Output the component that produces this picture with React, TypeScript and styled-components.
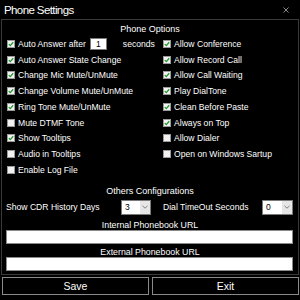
import styled, { createGlobalStyle } from "styled-components";

const GlobalStyle = createGlobalStyle`
  html, body {
    margin: 0;
    padding: 0;
    background: #000;
  }
  body {
    font-family: "Liberation Sans", Arial, sans-serif;
    color: #fff;
  }
`;

const Window = styled.div`
  width: 300px;
  height: 300px;
  background: #000;
  display: flex;
  flex-direction: column;
  overflow: hidden;
`;

const TitleBar = styled.div`
  height: 19px;
  display: flex;
  align-items: center;
  justify-content: space-between;
  padding: 0 11px 0 4px;
`;

const Title = styled.span`
  font-size: 11.5px;
  letter-spacing: -0.6px;
  color: #fff;
`;

const Panel = styled.div`
  margin: 0 1px;
  height: 256px;
  box-sizing: border-box;
  border: 1px solid #3a3a3a;
  display: flex;
  flex-direction: column;
`;

const SectionTitle = styled.div<{ $top: number }>`
  margin-top: ${(p) => p.$top}px;
  height: 12px;
  line-height: 12px;
  font-size: 9px;
  text-align: center;
  color: #fff;
`;

const OptionsGrid = styled.div`
  display: grid;
  grid-template-columns: 156px 1fr;
  grid-auto-flow: column;
  grid-template-rows: repeat(9, 15.75px);
  padding-left: 5px;
  margin-top: 1px;
`;

const Option = styled.label`
  display: flex;
  align-items: center;
  gap: 3px;
  font-size: 8.6px;
  color: #fff;
  white-space: nowrap;
`;

const NumberBox = styled.span`
  display: inline-flex;
  align-items: center;
  justify-content: center;
  width: 17px;
  height: 12px;
  box-sizing: border-box;
  background: #fff;
  border: 1px solid #7a7a7a;
  color: #000;
  font-size: 8.5px;
  margin: 0 13px 0 1px;
`;

const ConfigRow = styled.div`
  margin-top: 3px;
  display: grid;
  grid-template-columns: 115px 30px 12px 99px 31px;
  align-items: center;
  height: 15px;
  padding-left: 4px;
  font-size: 8.6px;
  color: #fff;
  white-space: nowrap;
`;

const Select = styled.div`
  display: flex;
  height: 15px;
  box-sizing: border-box;
  background: #fff;
  border: 1px solid #7a7a7a;
  color: #000;
  font-size: 8.5px;
`;

const SelectValue = styled.span`
  flex: 1;
  display: flex;
  align-items: center;
  padding-left: 3px;
`;

const SelectArrow = styled.span`
  width: 10px;
  background: #e6e6e6;
  display: flex;
  align-items: center;
  justify-content: center;
`;

const UrlLabel = styled.div<{ $top: number }>`
  margin-top: ${(p) => p.$top}px;
  height: 10px;
  line-height: 10px;
  font-size: 8.8px;
  text-align: center;
  color: #fff;
`;

const UrlInput = styled.div`
  margin: 0 5px 0 4px;
  height: 14px;
  box-sizing: border-box;
  background: #fff;
  border: 1px solid #8a8a8a;
`;

const ButtonRow = styled.div`
  margin-top: 2px;
  display: flex;
  gap: 3px;
  padding: 0 1px 0 2px;
`;

const Button = styled.div`
  flex: 1;
  height: 18px;
  box-sizing: border-box;
  border: 1px solid #8a8a8a;
  display: flex;
  align-items: center;
  justify-content: center;
  font-size: 10.5px;
  color: #fff;
`;

const Box = ({ checked }: { checked: boolean }) => (
  <svg width="8" height="8" viewBox="0 0 8 8" style={{ flex: "none" }}>
    <rect x="0.5" y="0.5" width="7" height="7" fill="#f2f2f2" stroke="#9a9a9a" />
    {checked && (
      <path d="M1.8 4.1 L3.3 5.6 L6.2 2.3" fill="none" stroke="#1f9a2a" strokeWidth="1.3" />
    )}
  </svg>
);

const Chevron = () => (
  <svg width="6" height="4" viewBox="0 0 6 4">
    <path d="M0.5 0.8 L3 3.2 L5.5 0.8" fill="none" stroke="#777" strokeWidth="0.9" />
  </svg>
);

const left: [string, boolean][] = [
  ["", true],
  ["Auto Answer State Change", true],
  ["Change Mic Mute/UnMute", true],
  ["Change Volume Mute/UnMute", true],
  ["Ring Tone Mute/UnMute", true],
  ["Mute DTMF Tone", false],
  ["Show Tooltips", true],
  ["Audio in Tooltips", false],
  ["Enable Log File", false],
];

const right: [string, boolean][] = [
  ["Allow Conference", true],
  ["Allow Record Call", true],
  ["Allow Call Waiting", true],
  ["Play DialTone", true],
  ["Clean Before Paste", true],
  ["Always on Top", true],
  ["Allow Dialer", false],
  ["Open on Windows Sartup", false],
];

export default function App() {
  return (
    <>
      <GlobalStyle />
      <Window>
        <TitleBar>
          <Title>Phone Settings</Title>
          <svg width="6" height="6" viewBox="0 0 6 6">
            <path d="M0.5 0.5 L5.5 5.5 M5.5 0.5 L0.5 5.5" stroke="#9a9a9a" strokeWidth="0.9" />
          </svg>
        </TitleBar>
        <Panel>
          <SectionTitle $top={3}>Phone Options</SectionTitle>
          <OptionsGrid>
            {left.map(([text, on], i) => (
              <Option key={"l" + i}>
                <Box checked={on} />
                {i === 0 ? (
                  <>
                    Auto Answer after
                    <NumberBox>1</NumberBox>
                    seconds
                  </>
                ) : (
                  text
                )}
              </Option>
            ))}
            {right.map(([text, on], i) => (
              <Option key={"r" + i}>
                <Box checked={on} />
                {text}
              </Option>
            ))}
          </OptionsGrid>
          <SectionTitle $top={7}>Others Configurations</SectionTitle>
          <ConfigRow>
            <span>Show CDR History Days</span>
            <Select>
              <SelectValue>3</SelectValue>
              <SelectArrow>
                <Chevron />
              </SelectArrow>
            </Select>
            <span />
            <span>Dial TimeOut Seconds</span>
            <Select>
              <SelectValue>0</SelectValue>
              <SelectArrow>
                <Chevron />
              </SelectArrow>
            </Select>
          </ConfigRow>
          <UrlLabel $top={5}>Internal Phonebook URL</UrlLabel>
          <UrlInput />
          <UrlLabel $top={3}>External Phonebook URL</UrlLabel>
          <UrlInput />
        </Panel>
        <ButtonRow>
          <Button>Save</Button>
          <Button>Exit</Button>
        </ButtonRow>
      </Window>
    </>
  );
}
